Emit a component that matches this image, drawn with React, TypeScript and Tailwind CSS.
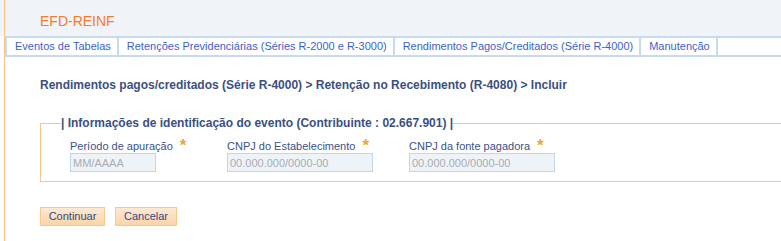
const tabs = [
  "Eventos de Tabelas",
  "Retenções Previdenciárias (Séries R-2000 e R-3000)",
  "Rendimentos Pagos/Creditados (Série R-4000)",
  "Manutenção",
];

function Campo({ label, placeholder, width, inputW }: { label: string; placeholder: string; width: string; inputW: string }) {
  return (
    <div className={`${width} shrink-0`}>
      <div className="flex items-start h-[14px] text-[11px] leading-[14px] text-[#3c5287]">
        <span>{label}</span>
        <span className="ml-[7px] text-[17px] leading-[13px] font-bold text-[#f7a22f]">*</span>
      </div>
      <input
        disabled
        placeholder={placeholder}
        className={`${inputW} block h-[19px] border border-[#c2d6e8] bg-[#eef3f8] px-[2px] text-[11px] text-[#444] placeholder:text-[#a9adb2] outline-none`}
      />
    </div>
  );
}

export default function App() {
  return (
    <div className="w-[781px] h-[241px] overflow-hidden bg-white font-['Liberation_Sans',Arial,sans-serif]">
      {/* cabeçalho */}
      <div className="bg-[#f0f4f8]">
        <div className="ml-[4px] h-[36px] border-l border-[#f9c58a] pl-[35px] pt-[13px] text-[14px] leading-[16px] text-[#f47b2a]">
          EFD-REINF
        </div>
      </div>

      <div className="ml-[4px] h-[205px] border-l border-[#f9c58a]">
        {/* menu */}
        <div className="flex h-[21px] border-y-2 border-[#c6dbed] border-l-2 bg-white text-[11px] leading-[17px] text-[#3d5fc8]">
          {tabs.map((t) => (
            <div key={t} className="border-r-2 border-[#c6dbed] pl-[8px] pr-[6px] whitespace-nowrap">
              {t}
            </div>
          ))}
        </div>

        <div className="pl-[35px]">
          <h1 className="mt-[21px] text-[12px] leading-[14px] font-bold text-[#3b5080]">
            Rendimentos pagos/creditados (Série R-4000) &gt; Retenção no Recebimento (R-4080) &gt; Incluir
          </h1>

          <fieldset className="mt-[24px] w-[800px] border border-[#f9c58a] pb-[9px]">
            <legend className="ml-[20px] px-0 text-[12px] leading-[14px] font-bold text-[#3b5080]">
              | Informações de identificação do evento (Contribuinte : 02.667.901) |
            </legend>
            <div className="flex mt-[9px] pl-[29px]">
              <Campo label="Período de apuração" placeholder="MM/AAAA" width="w-[157px]" inputW="w-[86px]" />
              <Campo label="CNPJ do Estabelecimento" placeholder="00.000.000/0000-00" width="w-[182px]" inputW="w-[146px]" />
              <Campo label="CNPJ da fonte pagadora" placeholder="00.000.000/0000-00" width="w-[182px]" inputW="w-[146px]" />
            </div>
          </fieldset>

          <div className="mt-[25px] flex gap-[10px]">
            <button className="h-[19px] w-[65px] border border-[#f8c891] bg-gradient-to-b from-[#fee9d3] to-[#fcd3a6] text-[11px] leading-[15px] text-[#2d4b8c]">
              Continuar
            </button>
            <button className="h-[19px] w-[62px] border border-[#f8c891] bg-gradient-to-b from-[#fee9d3] to-[#fcd3a6] text-[11px] leading-[15px] text-[#2d4b8c]">
              Cancelar
            </button>
          </div>
        </div>
      </div>
    </div>
  );
}
